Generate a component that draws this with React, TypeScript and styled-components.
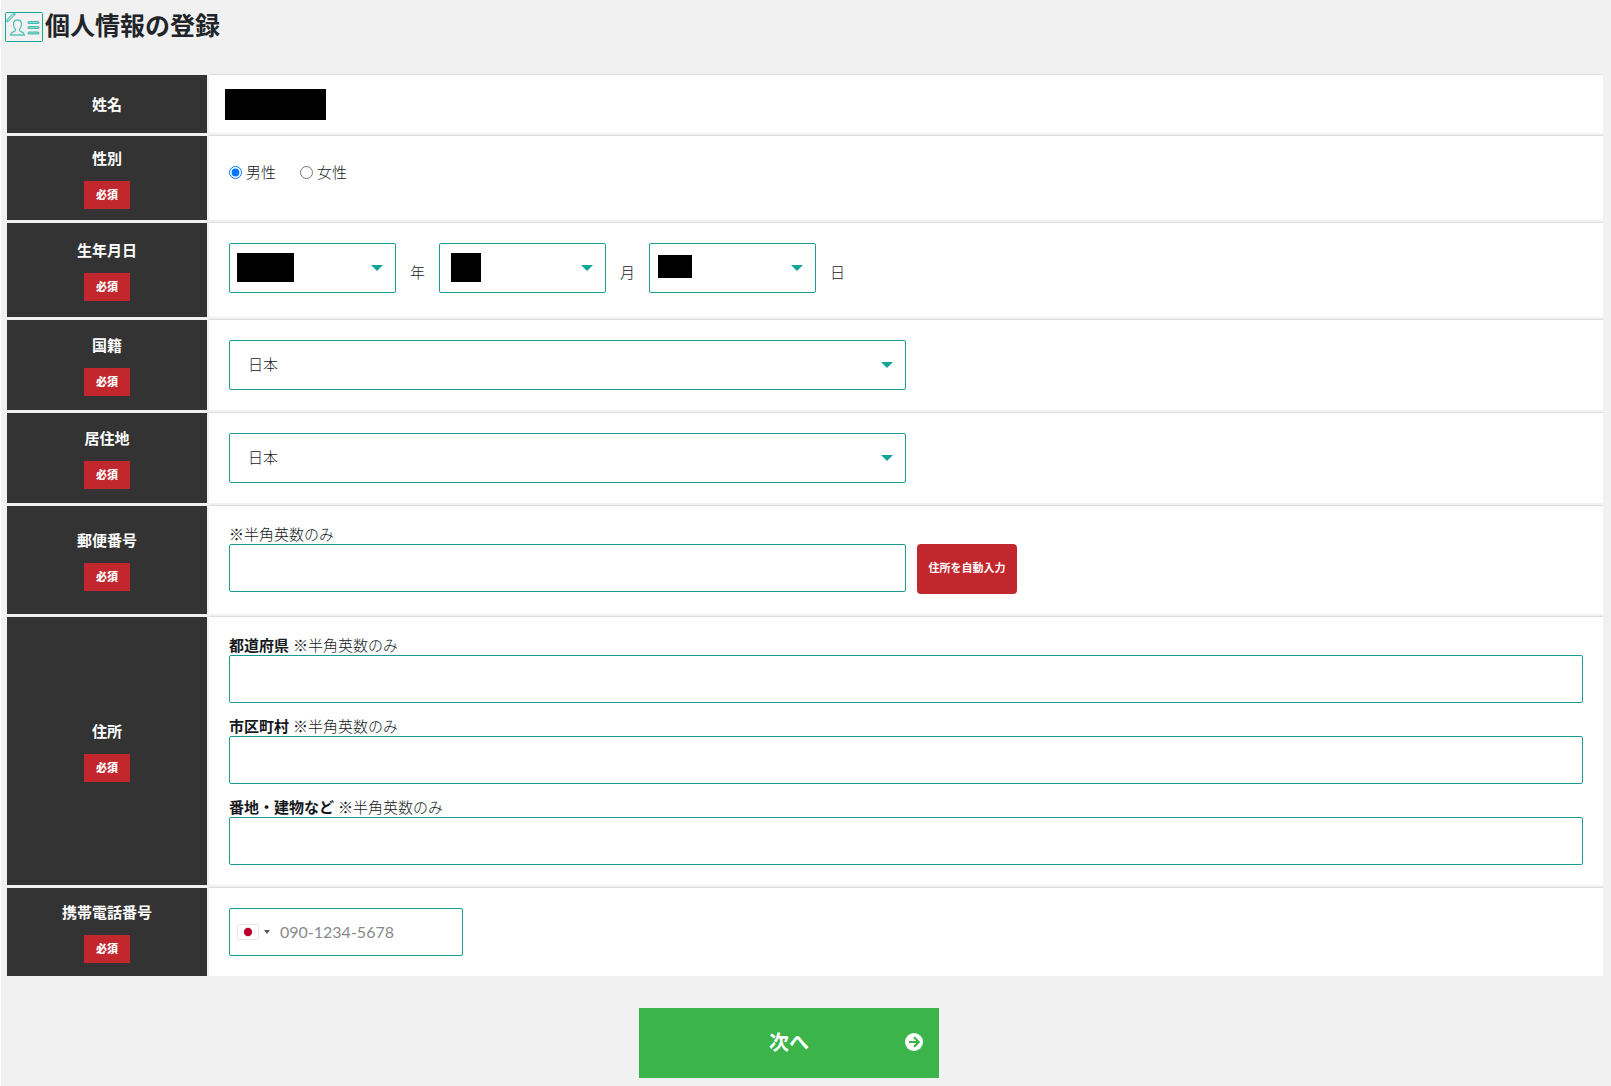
import React from "react";
import styled, { createGlobalStyle } from "styled-components";

const teal = "#1a9e93";
const red = "#c1272d";
const green = "#3bb54a";

const GlobalStyle = createGlobalStyle`
  *, *::before, *::after { box-sizing: border-box; }
  body {
    margin: 0;
    background: #f1f1f1;
    color: #16191c;
    font-family: Lato, "Noto Sans CJK JP", sans-serif;
    font-size: 15px;
    font-weight: 300;
    line-height: 18px;
  }
  button, input, select { font: inherit; color: inherit; }
`;

const Page = styled.main`
  min-height: 100vh;
  border-left: 1px solid #fff;
  padding: 0 8px 8px 4px;
`;

const Header = styled.header`
  display: flex;
  align-items: center;
  gap: 2px;
  height: 54px;
  margin-bottom: 20px;
`;

const Title = styled.h1`
  margin: 0;
  padding-bottom: 4px;
  color: #212529;
  font-size: 25px;
  font-weight: 700;
  line-height: 30px;
`;

const Form = styled.form`
  padding-left: 2px;
`;

const Rows = styled.div`
  display: grid;
  gap: 2px;
`;

const Row = styled.div`
  display: grid;
  grid-template-columns: 200px minmax(0, 1fr);
  gap: 2px;
`;

const Heading = styled.div`
  display: flex;
  flex-direction: column;
  align-items: center;
  justify-content: center;
  gap: 11px;
  margin-top: 1px;
  background: #333;
  color: #fff;
  font-weight: 700;
  line-height: 23px;
`;

const Required = styled.span`
  padding: 0 12px;
  background: ${red};
  font-size: 11px;
  font-weight: 900;
  line-height: 28px;
`;

const Cell = styled.div<{ $extra?: number; $compact?: boolean }>`
  padding: ${(p) => (p.$compact ? "14px 16px 13px" : "20px")};
  padding-bottom: ${(p) => (p.$extra ? `${20 + p.$extra}px` : undefined)};
  border-top: 1px solid #ddd;
  background: #fff;
`;

const NameMask = styled.div`
  width: 101px;
  height: 31px;
  background: #000;
`;

const Choices = styled.div`
  display: flex;
  gap: 24px;
`;

const Choice = styled.label`
  display: flex;
  align-items: center;
  gap: 4px;
  line-height: 32px;
`;

const Radio = styled.input`
  width: 13px;
  height: 13px;
  margin: 0;
`;

const DateLine = styled.div`
  display: flex;
  gap: 14px;
`;

const Unit = styled.span`
  padding-top: 4px;
  line-height: 50px;
`;

const SelectBox = styled.div<{ $width: string }>`
  position: relative;
  width: ${(p) => p.$width};
  height: 50px;
`;

const Select = styled.select`
  display: block;
  width: 100%;
  height: 100%;
  padding: 0 36px 2px 18px;
  appearance: none;
  border: 1px solid ${teal};
  border-radius: 2px;
  background: #fff;
`;

const SelectArrow = styled.svg`
  position: absolute;
  top: 22px;
  right: 13px;
  pointer-events: none;
`;

const Mask = styled.span<{ $x: number; $y: number; $w: number; $h: number }>`
  position: absolute;
  left: ${(p) => p.$x}px;
  top: ${(p) => p.$y}px;
  width: ${(p) => p.$w}px;
  height: ${(p) => p.$h}px;
  background: #000;
  pointer-events: none;
`;

const Label = styled.label`
  display: block;
  padding-bottom: 2px;
  line-height: 16px;
`;

const Strong = styled.strong`
  font-weight: 700;
`;

const Input = styled.input<{ $width?: string }>`
  display: block;
  width: ${(p) => p.$width ?? "100%"};
  height: 48px;
  padding: 0 20px;
  border: 1px solid ${teal};
  border-radius: 2px;
  background: #fff;
`;

const PostalLine = styled.div`
  display: flex;
  gap: 11px;
`;

const FillButton = styled.button`
  width: 100px;
  height: 50px;
  padding: 0 0 2px;
  border: 0;
  border-radius: 4px;
  background: ${red};
  color: #fff;
  font-size: 11px;
  font-weight: 700;
`;

const Stack = styled.div`
  display: grid;
  gap: 15px;
`;

const PhoneBox = styled.div`
  display: flex;
  align-items: center;
  width: 234px;
  height: 48px;
  border: 1px solid ${teal};
  border-radius: 2px;
`;

const CountryButton = styled.button`
  display: flex;
  align-items: center;
  gap: 5px;
  padding: 0 7px;
  border: 0;
  background: none;
`;

const PhoneInput = styled.input`
  flex: 1;
  min-width: 0;
  height: 100%;
  padding: 0 3px 2px;
  border: 0;
  background: none;
  font-size: 16px;
  font-weight: 400;
  &::placeholder { color: #8a8a8a; opacity: 1; }
`;

const Actions = styled.div`
  display: flex;
  justify-content: center;
  padding: 32px 32px 0 0;
`;

const NextButton = styled.button`
  display: grid;
  grid-template-columns: 18px 1fr 18px;
  align-items: center;
  width: 300px;
  height: 70px;
  padding: 0 16px 2px;
  border: 0;
  background: ${green};
  color: #fff;
  font-size: 20px;
  font-weight: 700;
`;

const NextText = styled.span`
  grid-column: 2;
`;

function ProfileIcon() {
  return (
    <svg width="38" height="30" viewBox="0 0 38 30" fill="none" aria-hidden="true">
      <rect x="0.5" y="0.5" width="37" height="29" rx="1" stroke="#16a597" />
      <path d="M2 10V7.500L7.500 2h3L2.500 10Z" fill="#b5e5df" stroke="#35b5a8" />
      <path
        d="M12.500 8c2.500 0 4 1.700 4 4.300 0 2-.8 3.700-2 4.700v1.500c0 1 4.500 1.200 5 4.500H5.500c.5-3.300 5-3.500 5-4.500V17c-1.200-1-2-2.700-2-4.700C8.500 9.700 10 8 12.500 8Z"
        stroke="#58c4b8"
        strokeWidth="1.300"
      />
      <path d="M24 10.500h9M24 15.500h9M24 21h9" stroke="#45bdaf" strokeWidth="3" strokeLinecap="round" />
      <path d="M24 10.500h9M24 15.500h9M24 21h9" stroke="#86d5cb" strokeWidth="1" strokeLinecap="round" />
    </svg>
  );
}

function Arrow() {
  return (
    <SelectArrow width="12" height="6" viewBox="0 0 12 6" aria-hidden="true">
      <path d="M0 0h12L6 6Z" fill="#12a599" />
    </SelectArrow>
  );
}

function NextIcon() {
  return (
    <svg width="18" height="18" viewBox="0 0 18 18" fill="none" aria-hidden="true">
      <circle cx="9" cy="9" r="9" fill="#fff" />
      <path d="M4 9h9.500M9 4.300 13.700 9 9 13.700" stroke={green} strokeWidth="2.100" />
    </svg>
  );
}

type FieldProps = {
  title: string;
  optional?: boolean;
  compact?: boolean;
  extra?: number;
  children: React.ReactNode;
};

function Field({ title, optional, compact, extra, children }: FieldProps) {
  return (
    <Row role="group" aria-label={title}>
      <Heading>
        <span>{title}</span>
        {!optional && <Required>必須</Required>}
      </Heading>
      <Cell $compact={compact} $extra={extra}>{children}</Cell>
    </Row>
  );
}

const dateParts = [
  { unit: "年", mask: { $x: 8, $y: 10, $w: 57, $h: 29 } },
  { unit: "月", mask: { $x: 12, $y: 10, $w: 30, $h: 29 } },
  { unit: "日", mask: { $x: 9, $y: 12, $w: 34, $h: 23 } },
];

const addressParts = [
  { id: "prefecture", name: "都道府県" },
  { id: "city", name: "市区町村" },
  { id: "street", name: "番地・建物など" },
];

export default function App() {
  return (
    <>
      <GlobalStyle />
      <Page>
        <Header>
          <ProfileIcon />
          <Title>個人情報の登録</Title>
        </Header>
        <Form onSubmit={(e) => e.preventDefault()}>
          <Rows>
            <Field title="姓名" optional compact>
              <NameMask />
            </Field>
            <Field title="性別" extra={12}>
              <Choices>
                <Choice>
                  <Radio type="radio" name="gender" defaultChecked />
                  男性
                </Choice>
                <Choice>
                  <Radio type="radio" name="gender" />
                  女性
                </Choice>
              </Choices>
            </Field>
            <Field title="生年月日">
              <DateLine>
                {dateParts.map(({ unit, mask }) => (
                  <React.Fragment key={unit}>
                    <SelectBox $width="167px">
                      <Select aria-label={unit} />
                      <Mask {...mask} />
                      <Arrow />
                    </SelectBox>
                    <Unit>{unit}</Unit>
                  </React.Fragment>
                ))}
              </DateLine>
            </Field>
            {["国籍", "居住地"].map((title) => (
              <Field title={title} key={title}>
                <SelectBox $width="50%">
                  <Select aria-label={title}>
                    <option>日本</option>
                  </Select>
                  <Arrow />
                </SelectBox>
              </Field>
            ))}
            <Field title="郵便番号">
              <Label htmlFor="postal">※半角英数のみ</Label>
              <PostalLine>
                <Input id="postal" $width="50%" />
                <FillButton type="button">住所を自動入力</FillButton>
              </PostalLine>
            </Field>
            <Field title="住所">
              <Stack>
                {addressParts.map(({ id, name }) => (
                  <div key={id}>
                    <Label htmlFor={id}>
                      <Strong>{name}</Strong> ※半角英数のみ
                    </Label>
                    <Input id={id} />
                  </div>
                ))}
              </Stack>
            </Field>
            <Field title="携帯電話番号">
              <PhoneBox>
                <CountryButton type="button" aria-label="日本 +81">
                  <svg width="22" height="16" viewBox="0 0 22 16" aria-hidden="true">
                    <rect x="0.5" y="0.5" width="21" height="15" rx="1" fill="#fff" stroke="#e8e8e8" />
                    <circle cx="11" cy="8" r="4.200" fill="#bc002d" />
                  </svg>
                  <svg width="6" height="4" viewBox="0 0 6 4" aria-hidden="true">
                    <path d="M0 0h6L3 4Z" fill="#555" />
                  </svg>
                </CountryButton>
                <PhoneInput type="tel" aria-label="携帯電話番号" placeholder="090-1234-5678" />
              </PhoneBox>
            </Field>
          </Rows>
          <Actions>
            <NextButton type="submit">
              <NextText>次へ</NextText>
              <NextIcon />
            </NextButton>
          </Actions>
        </Form>
      </Page>
    </>
  );
}
